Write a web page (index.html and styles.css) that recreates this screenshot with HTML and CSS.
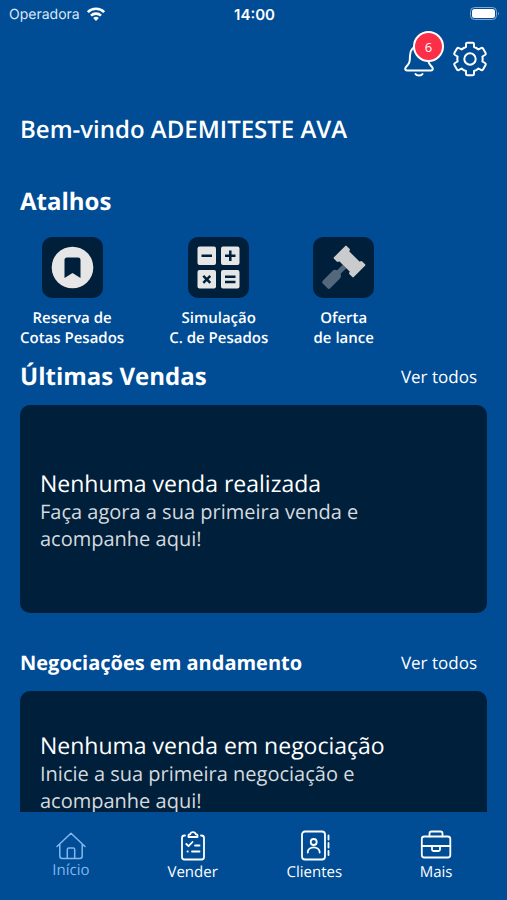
FILE: index.html
```html
<!DOCTYPE html>
<html lang="pt-BR">
<head>
<meta charset="utf-8">
<meta name="viewport" content="width=device-width, initial-scale=1">
<title>Início</title>
<link rel="stylesheet" href="styles.css">
</head>
<body>
<div class="status">
  <div class="carrier">
    <span>Operadora</span>
    <svg width="20" height="16" viewBox="0 0 20 16" fill="none" stroke="#fff" stroke-width="2.6">
      <path d="M1.8 6.1a11.8 11.8 0 0 1 16.4 0"/>
      <path d="M5 9.6a7.2 7.2 0 0 1 10 0"/>
      <path d="M10 15l-2.8-2.9a4 4 0 0 1 5.6 0z" fill="#fff" stroke="none"/>
    </svg>
  </div>
  <time class="clock">14:00</time>
  <svg class="battery" width="31" height="16" viewBox="0 0 31 16">
    <rect x="1.5" y="1.5" width="26" height="12" rx="4" fill="none" stroke="#86a9d0"/>
    <rect x="3" y="3" width="23" height="9" rx="2.5" fill="#fff"/>
    <path d="M29 5.5q1.6 2 0 4z" fill="#86a9d0"/>
  </svg>
</div>

<main class="content">
  <div class="actions">
    <button class="icon-button" type="button" aria-label="Notificações">
      <svg width="36" height="40" viewBox="0 0 36 40" fill="none" stroke="#fff" stroke-width="2" stroke-linecap="round" stroke-linejoin="round">
        <path d="M18 7c-5.500 0-9 4-9 9.500 0 7-.8 8-4 11.500-1.500 1.700-.8 3.500 1 3.500h24c1.800 0 2.500-1.800 1-3.500-3.200-3.500-4-4.500-4-11.500C27 11 23.500 7 18 7z"/>
        <path d="M14.500 35c1.200 2 5.800 2 7 0"/>
      </svg>
      <span class="badge">6</span>
    </button>
    <button class="icon-button" type="button" aria-label="Configurações">
      <svg width="36" height="40" viewBox="-18 -20 36 40" fill="none" stroke="#fff" stroke-width="2" stroke-linejoin="round">
        <path d="M-4-12V-14.900Q-4-16.300-2.600-16.300H2.600Q4-16.300 4-14.900V-12Q6.500-11.300 8.400-9.500L10.900-10.900Q12.200-11.700 13-10.400L15.600-6Q16.300-4.800 15-4L12.400-2.500Q13 0 12.400 2.500L15 4Q16.300 4.800 15.600 6L13 10.400Q12.200 11.700 10.900 10.900L8.400 9.500Q6.500 11.300 4 12V14.900Q4 16.300 2.600 16.300H-2.600Q-4 16.300-4 14.900V12Q-6.500 11.300-8.400 9.500L-10.900 10.900Q-12.200 11.700-13 10.400L-15.600 6Q-16.300 4.800-15 4L-12.400 2.500Q-13 0-12.400-2.500L-15-4Q-16.300-4.800-15.600-6L-13-10.400Q-12.200-11.700-10.900-10.900L-8.400-9.500Q-6.500-11.300-4-12z"/>
        <circle r="5.700"/>
      </svg>
    </button>
  </div>

  <h1 class="welcome">Bem-vindo ADEMITESTE AVA</h1>

  <h2 class="title">Atalhos</h2>
  <div class="shortcuts">
    <a class="shortcut" href="#reserva">
      <span class="tile">
        <svg width="61" height="61" viewBox="0 0 61 61">
          <circle cx="30.500" cy="30.500" r="20.800" fill="#e6e6e6"/>
          <path d="M25 20.500h11a2.500 2.500 0 0 1 2.500 2.500v18L30.500 36 22.500 41V23a2.500 2.500 0 0 1 2.500-2.500z" fill="#001f3b"/>
        </svg>
      </span>
      <span>Reserva de<br>Cotas Pesados</span>
    </a>
    <a class="shortcut" href="#simulacao">
      <span class="tile">
        <svg width="61" height="61" viewBox="0 0 61 61" fill="none" stroke="#001f3b" stroke-width="2.500">
          <g fill="#e6e6e6" stroke="none">
            <rect x="9.500" y="9.500" width="18.500" height="18.500" rx="2"/>
            <rect x="33" y="9.500" width="18.500" height="18.500" rx="2"/>
            <rect x="9.500" y="33" width="18.500" height="18.500" rx="2"/>
            <rect x="33" y="33" width="18.500" height="18.500" rx="2"/>
          </g>
          <path d="M13.500 18.700h10.500M37 18.700h10.500M42.300 13.500v10.500M15.300 38.800l7 7M22.300 38.800l-7 7M37 39.800h10.500M37 45h10.500"/>
        </svg>
      </span>
      <span>Simulação<br>C. de Pesados</span>
    </a>
    <a class="shortcut" href="#lance">
      <span class="tile">
        <svg width="61" height="61" viewBox="0 0 61 61">
          <g transform="translate(36.500 24.500) rotate(45)">
            <path d="M-2.500 7h5v8q2.800 1 2.800 3.500V32.500q0 2-2 2h-6.600q-2 0-2-2V18.500q0-2.500 2.800-3.500z" fill="#53687c"/>
            <path d="M-13-9h4q1.500 0 1.500 2H7.500q0-2 1.500-2H13q1 0 1 1V8q0 1-1 1H9Q7.500 9 7.500 7H-7.500Q-7.500 9-9 9H-13q-1 0-1-1V-8q0-1 1-1z" fill="#c9cbcd"/>
          </g>
        </svg>
      </span>
      <span>Oferta<br>de lance</span>
    </a>
  </div>

  <section>
    <header class="section-head">
      <h2 class="title">Últimas Vendas</h2>
      <a class="see-all" href="#vendas">Ver todos</a>
    </header>
    <div class="card">
      <h3>Nenhuma venda realizada</h3>
      <p>Faça agora a sua primeira venda e acompanhe aqui!</p>
    </div>
  </section>

  <section class="deals">
    <header class="section-head">
      <h2 class="subtitle">Negociações em andamento</h2>
      <a class="see-all" href="#negociacoes">Ver todos</a>
    </header>
    <div class="card card-short">
      <h3>Nenhuma venda em negociação</h3>
      <p>Inicie a sua primeira negociação e acompanhe aqui!</p>
    </div>
  </section>
</main>

<nav class="tabs">
  <a class="tab active" href="#inicio" aria-current="page">
    <svg width="32" height="30" viewBox="0 0 32 30" fill="none" stroke="currentColor" stroke-width="1.500" stroke-linecap="round" stroke-linejoin="round">
      <path d="M2 16.500L16 3.300 30 16.500M4.800 14.200V26q0 2.500 2.500 2.500H24.700q2.500 0 2.500-2.500V14.200M12.300 28.500V19.500q0-1.500 1.500-1.500h4.400q1.500 0 1.500 1.500v9"/>
    </svg>
    <span>Início</span>
  </a>
  <a class="tab" href="#vender">
    <svg width="32" height="32" viewBox="0 0 32 32" fill="none" stroke="currentColor" stroke-width="1.800" stroke-linecap="round" stroke-linejoin="round">
      <path d="M8 5.500H7.500Q5 5.500 5 8V27Q5 29.500 7.500 29.500H24.500Q27 29.500 27 27V8Q27 5.500 24.500 5.500H24"/>
      <path d="M11.500 7V5.300q0-1 1-1h.7a2.900 2.900 0 0 1 5.600 0h.7q1 0 1 1v1.700z"/>
      <path d="M9.300 14l2.200 2.200 4-4.200M18 15.500h4.500M15 21.500h7.500M10.500 21.500h.3"/>
    </svg>
    <span>Vender</span>
  </a>
  <a class="tab" href="#clientes">
    <svg width="32" height="32" viewBox="0 0 32 32" fill="none" stroke="currentColor" stroke-width="1.800" stroke-linecap="round" stroke-linejoin="round">
      <rect x="4" y="1.500" width="23" height="28" rx="3"/>
      <circle cx="15.700" cy="12" r="3"/>
      <path d="M9.800 22.500v-.7a5.900 4.500 0 0 1 11.800 0v.7M30.500 5.500v4M30.500 13v4.500M30.500 21v4"/>
    </svg>
    <span>Clientes</span>
  </a>
  <a class="tab" href="#mais">
    <svg width="32" height="32" viewBox="0 0 32 32" fill="none" stroke="currentColor" stroke-width="1.800" stroke-linecap="round" stroke-linejoin="round">
      <rect x="1.800" y="6.500" width="28.500" height="21" rx="2.500"/>
      <path d="M9.500 6.500V3.500q0-2 2-2h9q2 0 2 2v3M1.800 16H30.300M12 16v3.500q0 1.500 1.500 1.500h5q1.500 0 1.500-1.500v-3.500"/>
    </svg>
    <span>Mais</span>
  </a>
</nav>
</body>
</html>
```

FILE: styles.css
```css
* {
  box-sizing: border-box;
}

body {
  display: flex;
  flex-direction: column;
  height: 100vh;
  margin: 0;
  background: #004c95;
  color: #fff;
  font-family: "Open Sans", "Noto Sans", sans-serif;
  text-rendering: geometricPrecision;
}

h1,
h2,
h3,
p {
  margin: 0;
}

a {
  color: inherit;
  text-decoration: none;
}

svg {
  display: block;
}

.status {
  display: grid;
  grid-template-columns: 1fr auto 1fr;
  align-items: center;
  flex: none;
  height: 28px;
  padding: 0 7px 0 9px;
  font-family: Inter, "Liberation Sans", sans-serif;
  font-size: 14px;
}

.carrier {
  display: flex;
  align-items: center;
  gap: 6px;
  color: #dce8f5;
}

.clock {
  font-size: 15px;
  font-weight: 600;
}

.battery {
  justify-self: end;
}

.content {
  flex: 1;
  min-height: 0;
  overflow: hidden;
  padding: 11px 20px 0;
}

.actions {
  display: flex;
  justify-content: flex-end;
  gap: 15px;
  margin-right: -1px;
}

.icon-button {
  position: relative;
  padding: 0;
  border: 0;
  background: none;
  color: inherit;
  font: inherit;
}

.badge {
  position: absolute;
  top: -8px;
  right: -7px;
  width: 31px;
  height: 31px;
  border: 2px solid #fff;
  border-radius: 50%;
  background: #fb3048;
  font-size: 13px;
  line-height: 28px;
  text-align: center;
}

.welcome {
  margin-top: 33px;
  font-size: 24px;
  font-weight: 600;
  line-height: 36px;
}

.title {
  font-size: 24px;
  font-weight: 700;
  line-height: 36px;
}

.welcome + .title {
  margin-top: 36px;
}

.shortcuts {
  display: flex;
  gap: 45px;
  margin-top: 17px;
}

.shortcut {
  display: flex;
  flex-direction: column;
  align-items: center;
  gap: 10px;
  font-size: 15px;
  font-weight: 600;
  line-height: 20px;
  text-align: center;
}

.tile {
  border-radius: 10px;
  background: #001f3b;
}

.section-head {
  display: flex;
  align-items: center;
  justify-content: space-between;
  margin: 11px 10px 10px 0;
}

.see-all {
  font-size: 17px;
  line-height: 24px;
}

.subtitle {
  font-size: 20px;
  font-weight: 700;
  line-height: 36px;
}

.card {
  display: flex;
  flex-direction: column;
  justify-content: center;
  min-height: 208px;
  padding: 34px 80px 32px 20px;
  border-radius: 10px;
  background: #001f3b;
}

.card-short {
  min-height: 160px;
}

.card h3 {
  font-size: 23px;
  font-weight: 400;
  line-height: 30px;
}

.card p {
  color: #d5dade;
  font-size: 20px;
  line-height: 27px;
}

.deals {
  margin-top: 32px;
}

.tabs {
  display: flex;
  flex: none;
  height: 88px;
  padding: 18px 10px 0;
}

.tab {
  display: flex;
  flex: 1;
  flex-direction: column;
  align-items: center;
  font-size: 15px;
  line-height: 20px;
}

.active {
  color: #80b8ee;
}
```
